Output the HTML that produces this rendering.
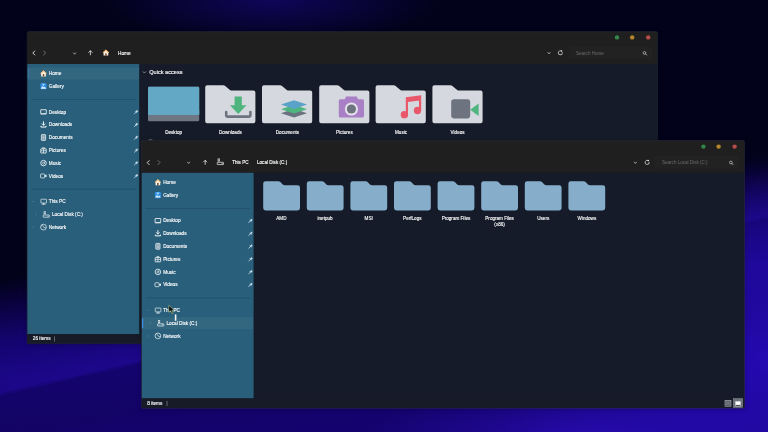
<!DOCTYPE html>
<html>
<head>
<meta charset="utf-8">
<title>File Explorer</title>
<style>
html,body{margin:0;padding:0;width:768px;height:432px;overflow:hidden;background:#02021a;}
body{font-family:"Liberation Sans",sans-serif;}
#stage{position:absolute;left:0;top:0;width:1920px;height:1080px;transform:scale(0.4);transform-origin:0 0;overflow:hidden;
  background:
    radial-gradient(ellipse 420px 110px at 680px 0px, rgba(18,6,100,0.85), rgba(18,6,100,0) 100%),
    radial-gradient(ellipse 700px 520px at 1920px 900px, rgba(42,12,200,0.75), rgba(42,12,200,0) 100%),
    radial-gradient(ellipse 520px 110px at 1450px 1085px, rgba(48,14,200,0.55), rgba(48,14,200,0) 100%),
    linear-gradient(167deg, rgba(50,20,190,0) 57%, rgba(50,20,190,0.17) 64.4%, rgba(0,0,30,0.17) 65.1%, rgba(0,0,30,0) 74%),
    linear-gradient(171deg, rgba(2,2,26,0) 0%, rgba(2,2,26,0) 50.5%, #0c0248 56.5%, #140470 62%, #180580 69%, #130368 78%, #170478 100%),
    #02021a;
}
#ui{position:absolute;left:0;top:0;width:1920px;height:1080px;filter:blur(0.9px);}
.win{position:absolute;background:#151b28;border-radius:6px 6px 3px 3px;overflow:hidden;box-shadow:0 0 0 1px rgba(58,58,72,0.7), 0 2px 10px rgba(0,0,0,0.25);}
.tb{position:absolute;left:0;top:0;right:0;background:#1f1f1f;box-shadow:inset 0 1.5px 0 rgba(255,255,255,0.055);}
.side{position:absolute;left:0;background:#295f7a;overflow:hidden;}
.status{position:absolute;left:0;right:0;bottom:0;height:24px;background:#161b27;}
.t{position:absolute;color:#fff;font-size:11.8px;line-height:16px;white-space:nowrap;-webkit-text-stroke:0.3px #fff;}
.ic{position:absolute;overflow:visible;}
.dot{position:absolute;width:11px;height:11px;border-radius:6px;}
.sel{position:absolute;left:0;right:0;height:30px;background:rgba(255,255,255,0.05);}
.sep{position:absolute;height:1.5px;background:rgba(8,28,42,0.22);}
.lbl{position:absolute;color:#fff;font-size:11.5px;line-height:15px;text-align:center;width:120px;-webkit-text-stroke:0.3px #fff;}
.search{position:absolute;height:32px;background:#222222;border-radius:4px;}
</style>
</head>
<body>
<div id="stage">
<div id="ui">

<div class="win" id="w1" style="left:68px;top:79px;width:1576px;height:780px;">
<div class="tb" style="height:81px;">
<svg class="ic" style="left:11px;top:47.0px" width="11" height="13" viewBox="0 0 11 13" ><path d="M8 1.5 L3 6.5 L8 11.5" fill="none" stroke="#fff" stroke-width="2" stroke-linecap="round" stroke-linejoin="round" opacity="1"/></svg>
<svg class="ic" style="left:38px;top:47.0px" width="11" height="13" viewBox="0 0 11 13" ><path d="M3 1.5 L8 6.5 L3 11.5" fill="none" stroke="#fff" stroke-width="2" stroke-linecap="round" stroke-linejoin="round" opacity="0.45"/></svg>
<svg class="ic" style="left:113.5px;top:51.5px" width="9" height="7" viewBox="0 0 9 7" ><path d="M1.8 1.3 L4.5 4.6 L7.2 1.3" fill="none" stroke="#fff" stroke-width="1.7" stroke-linecap="round" stroke-linejoin="round" opacity="0.85"/></svg>
<svg class="ic" style="left:152px;top:46.0px" width="12" height="13" viewBox="0 0 12 13" ><path d="M6 12 V2.4 M1.8 6 L6 1.8 L10.2 6" fill="none" stroke="#fff" stroke-width="2.1" stroke-linecap="round" stroke-linejoin="round" opacity="0.85"/></svg>
<svg class="ic" style="left:188.25px;top:44.25px" width="17.5" height="17.5" viewBox="0 0 16 16" ><path d="M8 1.2 L15 7.6 L13.4 7.6 L13.4 14.6 L2.6 14.6 L2.6 7.6 L1 7.6 Z" fill="#fff4e6"/><path d="M8 0.8 L15.4 7.8 L13.9 9 L8 3.6 L2.1 9 L0.6 7.8 Z" fill="#f2ae66"/><rect x="6.3" y="9.4" width="3.4" height="5.2" fill="#6e4424"/></svg>
<div class="t" style="left:227px;top:45.5px">Home</div>
<div class="search" style="left:1353px;top:37px;width:209px"></div>
<svg class="ic" style="left:1299.5px;top:51px" width="9" height="7" viewBox="0 0 9 7" ><path d="M1.8 1.3 L4.5 4.6 L7.2 1.3" fill="none" stroke="#fff" stroke-width="1.7" stroke-linecap="round" stroke-linejoin="round" opacity="0.85"/></svg>
<svg class="ic" style="left:1325px;top:45px" width="16" height="16" viewBox="0 0 16 16" ><path d="M13.2 8 A5.2 5.2 0 1 1 10.6 3.5" fill="none" stroke="#fff" stroke-width="1.8" stroke-linecap="round" opacity="0.9"/><path d="M9.4 0.8 L13.2 3.2 L9.8 5.8 Z" fill="#fff" opacity="0.9"/></svg>
<div class="t" style="left:1372px;top:45.5px;color:#6c6c6c;-webkit-text-stroke:0;font-size:11.4px">Search Home</div>
<svg class="ic" style="left:1538px;top:48px" width="12" height="12" viewBox="0 0 12 12" ><circle cx="5.2" cy="5.2" r="3.4" fill="none" stroke="#fff" stroke-width="1.6" opacity="0.8"/><path d="M7.8 7.8 L10.6 10.6" stroke="#fff" stroke-width="1.8" stroke-linecap="round" opacity="0.8"/></svg>
<div class="dot" style="left:1469px;top:9px;background:#328549"></div>
<div class="dot" style="left:1507px;top:9px;background:#b3862d"></div>
<div class="dot" style="left:1547px;top:9px;background:#b54c49"></div>
</div>
<div class="side" id="s1" style="top:81px;width:280px;height:675px;"><div style="position:absolute;left:0;top:-80px;width:280px;height:760px">
<div class="sep" style="left:10px;width:262px;top:168px"></div>
<div class="sep" style="left:10px;width:262px;top:392px"></div>
<div class="sel" style="top:89px"></div>
<div style="position:absolute;left:1px;top:90px;width:3px;height:28px;background:rgba(60,135,215,0.4);border-radius:2px"></div>
<svg class="ic" style="left:32.25px;top:95.25px" width="17.5" height="17.5" viewBox="0 0 16 16" ><path d="M8 1.2 L15 7.6 L13.4 7.6 L13.4 14.6 L2.6 14.6 L2.6 7.6 L1 7.6 Z" fill="#fff4e6"/><path d="M8 0.8 L15.4 7.8 L13.9 9 L8 3.6 L2.1 9 L0.6 7.8 Z" fill="#f2ae66"/><rect x="6.3" y="9.4" width="3.4" height="5.2" fill="#6e4424"/></svg>
<div class="t" style="left:54px;top:96px">Home</div>
<svg class="ic" style="left:32.25px;top:127.25px" width="17.5" height="17.5" viewBox="0 0 16 16" ><rect x="1" y="1" width="14" height="14" rx="2.5" fill="#2f8fe6"/><path d="M1.5 13.5 L6 7.5 L9 11 L11 9 L14.5 13.5 Z" fill="#dff1ff"/><path d="M4 2 L12 2 L8 7.5 Z" fill="#9dd3ff"/></svg>
<div class="t" style="left:54px;top:128px">Gallery</div>
<svg class="ic" style="left:32.25px;top:191.25px" width="17.5" height="17.5" viewBox="0 0 16 16" ><rect x="1.6" y="3" width="12.8" height="9" rx="0.6" fill="none" stroke="#fff" stroke-width="1.8"/><path d="M1 13.2 H15" stroke="#fff" stroke-width="1.3"/></svg>
<div class="t" style="left:54px;top:192px">Desktop</div>
<svg class="ic" style="left:266.5px;top:194px" width="11.5" height="11.5" viewBox="0 0 12 12" ><path d="M1 11 L5.2 6.8" stroke="#cfe3ee" stroke-width="2" stroke-linecap="round"/><path d="M7.6 1.2 L10.8 4.4 L9.6 5 L7.6 7 L7.4 9 L3 4.6 L5 4.4 L7 2.4 Z" fill="#cfe3ee" stroke="#cfe3ee" stroke-width="0.6"/></svg>
<svg class="ic" style="left:32.25px;top:223.25px" width="17.5" height="17.5" viewBox="0 0 16 16" ><path d="M8 1.2 V8.6 M4.8 6 L8 9.4 L11.2 6" fill="none" stroke="#fff" stroke-width="2" stroke-linecap="round" stroke-linejoin="round"/><path d="M2.2 10.6 V13.4 H13.8 V10.6" fill="none" stroke="#fff" stroke-width="2.2" stroke-linejoin="round"/></svg>
<div class="t" style="left:54px;top:224px">Downloads</div>
<svg class="ic" style="left:266.5px;top:226px" width="11.5" height="11.5" viewBox="0 0 12 12" ><path d="M1 11 L5.2 6.8" stroke="#cfe3ee" stroke-width="2" stroke-linecap="round"/><path d="M7.6 1.2 L10.8 4.4 L9.6 5 L7.6 7 L7.4 9 L3 4.6 L5 4.4 L7 2.4 Z" fill="#cfe3ee" stroke="#cfe3ee" stroke-width="0.6"/></svg>
<svg class="ic" style="left:32.25px;top:255.25px" width="17.5" height="17.5" viewBox="0 0 16 16" ><rect x="3.2" y="1.4" width="9.6" height="13.2" rx="1.2" fill="rgba(255,255,255,0.35)" stroke="#fff" stroke-width="1.6"/><path d="M5.8 5 H10.2 M5.8 8 H10.2 M5.8 11 H10.2" stroke="#fff" stroke-width="1.1"/></svg>
<div class="t" style="left:54px;top:256px">Documents</div>
<svg class="ic" style="left:266.5px;top:258px" width="11.5" height="11.5" viewBox="0 0 12 12" ><path d="M1 11 L5.2 6.8" stroke="#cfe3ee" stroke-width="2" stroke-linecap="round"/><path d="M7.6 1.2 L10.8 4.4 L9.6 5 L7.6 7 L7.4 9 L3 4.6 L5 4.4 L7 2.4 Z" fill="#cfe3ee" stroke="#cfe3ee" stroke-width="0.6"/></svg>
<svg class="ic" style="left:32.25px;top:287.25px" width="17.5" height="17.5" viewBox="0 0 16 16" ><rect x="1.8" y="4.6" width="12.4" height="9.6" rx="0.8" fill="none" stroke="#fff" stroke-width="1.8"/><path d="M5.6 4.4 V2 H10.4 V4.4 M8 4.6 V14 M2 9 H14" fill="none" stroke="#fff" stroke-width="1.4"/></svg>
<div class="t" style="left:54px;top:288px">Pictures</div>
<svg class="ic" style="left:266.5px;top:290px" width="11.5" height="11.5" viewBox="0 0 12 12" ><path d="M1 11 L5.2 6.8" stroke="#cfe3ee" stroke-width="2" stroke-linecap="round"/><path d="M7.6 1.2 L10.8 4.4 L9.6 5 L7.6 7 L7.4 9 L3 4.6 L5 4.4 L7 2.4 Z" fill="#cfe3ee" stroke="#cfe3ee" stroke-width="0.6"/></svg>
<svg class="ic" style="left:32.25px;top:319.25px" width="17.5" height="17.5" viewBox="0 0 16 16" ><circle cx="8" cy="8" r="6.3" fill="none" stroke="#fff" stroke-width="1.8"/><circle cx="8" cy="8.4" r="2.3" fill="none" stroke="#fff" stroke-width="1.3"/><path d="M10.2 8.4 V4.4" stroke="#fff" stroke-width="1.2"/></svg>
<div class="t" style="left:54px;top:320px">Music</div>
<svg class="ic" style="left:266.5px;top:322px" width="11.5" height="11.5" viewBox="0 0 12 12" ><path d="M1 11 L5.2 6.8" stroke="#cfe3ee" stroke-width="2" stroke-linecap="round"/><path d="M7.6 1.2 L10.8 4.4 L9.6 5 L7.6 7 L7.4 9 L3 4.6 L5 4.4 L7 2.4 Z" fill="#cfe3ee" stroke="#cfe3ee" stroke-width="0.6"/></svg>
<svg class="ic" style="left:32.25px;top:351.25px" width="17.5" height="17.5" viewBox="0 0 16 16" ><rect x="1.2" y="3.6" width="9.6" height="9" rx="1.4" fill="none" stroke="#fff" stroke-width="1.5"/><path d="M11 7 L14.8 5 V11.2 L11 9.2 Z" fill="#fff"/></svg>
<div class="t" style="left:54px;top:352px">Videos</div>
<svg class="ic" style="left:266.5px;top:354px" width="11.5" height="11.5" viewBox="0 0 12 12" ><path d="M1 11 L5.2 6.8" stroke="#cfe3ee" stroke-width="2" stroke-linecap="round"/><path d="M7.6 1.2 L10.8 4.4 L9.6 5 L7.6 7 L7.4 9 L3 4.6 L5 4.4 L7 2.4 Z" fill="#cfe3ee" stroke="#cfe3ee" stroke-width="0.6"/></svg>
<svg class="ic" style="left:32.75px;top:415.75px" width="16.5" height="16.5" viewBox="0 0 16 16" ><rect x="1.2" y="2" width="13.6" height="9.4" rx="1.2" fill="none" stroke="#fff" stroke-width="1.5"/><path d="M4.3 14.2 H11.7 M8 11.6 V14" stroke="#fff" stroke-width="1.5" stroke-linecap="round"/></svg>
<div class="t" style="left:54px;top:416px">This PC</div>
<svg class="ic" style="left:11px;top:421px" width="8" height="6" viewBox="0 0 8 6" ><path d="M1 1.2 L4 4.4 L7 1.2" fill="none" stroke="#9fb8c6" stroke-width="1.3" opacity="0.4"/></svg>
<svg class="ic" style="left:39.25px;top:447.25px" width="17.5" height="17.5" viewBox="0 0 16 16" ><rect x="1" y="9.6" width="14" height="5" rx="0.8" fill="none" stroke="#fff" stroke-width="1.5"/><path d="M2 1 H6.6 V7.6 H2 Z" fill="#fff"/><path d="M4.3 1 V7.6 M2 4.3 H6.6" stroke="#295f7a" stroke-width="0.9"/><rect x="10.6" y="11.4" width="2.4" height="1.4" fill="#fff"/></svg>
<div class="t" style="left:62px;top:448px">Local Disk (C:)</div>
<svg class="ic" style="left:19px;top:452px" width="6" height="8" viewBox="0 0 6 8" ><path d="M1.2 1 L4.4 4 L1.2 7" fill="none" stroke="#9fb8c6" stroke-width="1.3" opacity="0.4"/></svg>
<svg class="ic" style="left:32.25px;top:479.25px" width="17.5" height="17.5" viewBox="0 0 16 16" ><circle cx="8" cy="8" r="6.6" fill="none" stroke="#fff" stroke-width="1.5"/><path d="M5.2 2.6 L8.4 8.4 L13.6 10" fill="none" stroke="#fff" stroke-width="1.3"/></svg>
<div class="t" style="left:54px;top:480px">Network</div>
<svg class="ic" style="left:11px;top:485px" width="8" height="6" viewBox="0 0 8 6" ><path d="M1 1.2 L4 4.4 L7 1.2" fill="none" stroke="#9fb8c6" stroke-width="1.3" opacity="0.4"/></svg>
</div></div>
<svg class="ic" style="left:288px;top:98px" width="10" height="8" viewBox="0 0 10 8" ><path d="M1 1.5 L5 5.5 L9 1.5" fill="none" stroke="#cfd6e0" stroke-width="1.4"/></svg>
<div class="t" style="left:305px;top:92px;font-size:14px;line-height:18px">Quick access</div>
<svg class="ic" style="left:302px;top:138px" width="128" height="86" viewBox="0 0 128 86" ><rect x="0" y="0" width="128" height="86" rx="3" fill="#6f7782"/><rect x="0" y="0" width="128" height="70" rx="3" fill="#63a9c6"/><rect x="0" y="60" width="128" height="10" fill="#63a9c6"/></svg>
<svg class="ic" style="left:444.5px;top:133.5px" width="125.5" height="95" viewBox="0 0 125.5 95" ><path d="M5 0 H45 Q48 0 50 2 L62 12 Q64 13.5 67 13.5 H120.5 Q125.5 13.5 125.5 18.5 V90 Q125.5 95 120.5 95 H5 Q0 95 0 90 V5 Q0 0 5 0 Z" fill="#d5d8de"/><path d="M73.5 28 H91.5 V50 H103 L82.5 72 L62 50 H73.5 Z" fill="#4db57d"/><path d="M52.5 67 V74.5 Q52.5 78.5 56.5 78.5 H109 Q113 78.5 113 74.5 V67" fill="none" stroke="#6d7480" stroke-width="6.5" stroke-linecap="round"/></svg>
<svg class="ic" style="left:587px;top:133.5px" width="125.5" height="95" viewBox="0 0 125.5 95" ><path d="M5 0 H45 Q48 0 50 2 L62 12 Q64 13.5 67 13.5 H120.5 Q125.5 13.5 125.5 18.5 V90 Q125.5 95 120.5 95 H5 Q0 95 0 90 V5 Q0 0 5 0 Z" fill="#d5d8de"/><path d="M80 59 L112.5 70 L80 81 L47.5 70 Z" fill="#6b7380"/><path d="M80 49 L112.5 60 L80 71 L47.5 60 Z" fill="#4db57d"/><path d="M80 37.5 L112.5 48.5 L80 59.5 L47.5 48.5 Z" fill="#5aa2c8"/></svg>
<svg class="ic" style="left:729.5px;top:133.5px" width="125.5" height="95" viewBox="0 0 125.5 95" ><path d="M5 0 H45 Q48 0 50 2 L62 12 Q64 13.5 67 13.5 H120.5 Q125.5 13.5 125.5 18.5 V90 Q125.5 95 120.5 95 H5 Q0 95 0 90 V5 Q0 0 5 0 Z" fill="#d5d8de"/><path d="M67 28 H94 L97 35 H108 Q112 35 112 39 V77 Q112 81 108 81 H53 Q49 81 49 77 V39 Q49 35 53 35 H64 Z" fill="#a97fc6"/><circle cx="80.5" cy="59.5" r="16.5" fill="#e6e2ec"/><circle cx="80.5" cy="59.5" r="11.5" fill="#6d7480"/></svg>
<svg class="ic" style="left:871px;top:133.5px" width="125.5" height="95" viewBox="0 0 125.5 95" ><path d="M5 0 H45 Q48 0 50 2 L62 12 Q64 13.5 67 13.5 H120.5 Q125.5 13.5 125.5 18.5 V90 Q125.5 95 120.5 95 H5 Q0 95 0 90 V5 Q0 0 5 0 Z" fill="#d5d8de"/><path d="M75.5 30 L114 25 V37.5 L81 42 V74 H75.5 Z M108.5 34 H114 V64 H108.5 Z" fill="#e8586a"/><circle cx="72" cy="73.6" r="9.2" fill="#e8586a"/><circle cx="104.7" cy="63.3" r="9.2" fill="#e8586a"/></svg>
<svg class="ic" style="left:1012.5px;top:133.5px" width="125.5" height="95" viewBox="0 0 125.5 95" ><path d="M5 0 H45 Q48 0 50 2 L62 12 Q64 13.5 67 13.5 H120.5 Q125.5 13.5 125.5 18.5 V90 Q125.5 95 120.5 95 H5 Q0 95 0 90 V5 Q0 0 5 0 Z" fill="#d5d8de"/><rect x="47" y="35" width="47.5" height="48" rx="7" fill="#6d7480"/><path d="M94.5 61.3 L115.5 45.5 V77 Z" fill="#4db57d"/></svg>
<div class="lbl" style="left:306px;top:246px">Desktop</div>
<div class="lbl" style="left:448.0px;top:246px">Downloads</div>
<div class="lbl" style="left:590.5px;top:246px">Documents</div>
<div class="lbl" style="left:733.0px;top:246px">Pictures</div>
<div class="lbl" style="left:874.5px;top:246px">Music</div>
<div class="lbl" style="left:1016.0px;top:246px">Videos</div>
<div style="position:absolute;left:304px;top:270px;width:9px;height:2px;background:#cfd6e0;opacity:.75"></div>
<div class="status"><div class="t" style="left:14px;top:4px;font-size:11.8px">26 items</div><div style="position:absolute;left:68px;top:6px;width:1px;height:13px;background:#d0d0d0"></div></div>
</div>
<div class="win" id="w2" style="left:354px;top:351px;width:1507px;height:669px;">
<div class="tb" style="height:81px;">
<svg class="ic" style="left:10.5px;top:48.5px" width="11" height="13" viewBox="0 0 11 13" ><path d="M8 1.5 L3 6.5 L8 11.5" fill="none" stroke="#fff" stroke-width="2" stroke-linecap="round" stroke-linejoin="round" opacity="1"/></svg>
<svg class="ic" style="left:37.5px;top:48.5px" width="11" height="13" viewBox="0 0 11 13" ><path d="M3 1.5 L8 6.5 L3 11.5" fill="none" stroke="#fff" stroke-width="2" stroke-linecap="round" stroke-linejoin="round" opacity="0.45"/></svg>
<svg class="ic" style="left:113.0px;top:53px" width="9" height="7" viewBox="0 0 9 7" ><path d="M1.8 1.3 L4.5 4.6 L7.2 1.3" fill="none" stroke="#fff" stroke-width="1.7" stroke-linecap="round" stroke-linejoin="round" opacity="0.85"/></svg>
<svg class="ic" style="left:152.5px;top:47.5px" width="12" height="13" viewBox="0 0 12 13" ><path d="M6 12 V2.4 M1.8 6 L6 1.8 L10.2 6" fill="none" stroke="#fff" stroke-width="2.1" stroke-linecap="round" stroke-linejoin="round" opacity="0.85"/></svg>
<svg class="ic" style="left:187.5px;top:44.0px" width="18" height="18" viewBox="0 0 16 16" ><rect x="1" y="9.6" width="14" height="5" rx="0.8" fill="none" stroke="#fff" stroke-width="1.5"/><path d="M2 1 H6.6 V7.6 H2 Z" fill="#fff"/><path d="M4.3 1 V7.6 M2 4.3 H6.6" stroke="#1f1f1f" stroke-width="0.9"/><rect x="10.6" y="11.4" width="2.4" height="1.4" fill="#fff"/></svg>
<div class="t" style="left:226.5px;top:46.5px;font-size:11.5px">This PC</div>
<div class="t" style="left:288.5px;top:46.5px;font-size:11.5px">Local Disk (C:)</div>
<div class="search" style="left:1283px;top:39px;width:209px"></div>
<svg class="ic" style="left:1229.5px;top:52.5px" width="9" height="7" viewBox="0 0 9 7" ><path d="M1.8 1.3 L4.5 4.6 L7.2 1.3" fill="none" stroke="#fff" stroke-width="1.7" stroke-linecap="round" stroke-linejoin="round" opacity="0.85"/></svg>
<svg class="ic" style="left:1256px;top:46.5px" width="16" height="16" viewBox="0 0 16 16" ><path d="M13.2 8 A5.2 5.2 0 1 1 10.6 3.5" fill="none" stroke="#fff" stroke-width="1.8" stroke-linecap="round" opacity="0.9"/><path d="M9.4 0.8 L13.2 3.2 L9.8 5.8 Z" fill="#fff" opacity="0.9"/></svg>
<div class="t" style="left:1301px;top:47px;color:#6c6c6c;-webkit-text-stroke:0;font-size:11.4px">Search Local Disk (C:)</div>
<svg class="ic" style="left:1467.5px;top:49.5px" width="12" height="12" viewBox="0 0 12 12" ><circle cx="5.2" cy="5.2" r="3.4" fill="none" stroke="#fff" stroke-width="1.6" opacity="0.8"/><path d="M7.8 7.8 L10.6 10.6" stroke="#fff" stroke-width="1.8" stroke-linecap="round" opacity="0.8"/></svg>
<div class="dot" style="left:1399px;top:10px;background:#328549"></div>
<div class="dot" style="left:1437px;top:10px;background:#b3862d"></div>
<div class="dot" style="left:1477px;top:10px;background:#b54c49"></div>
</div>
<div class="side" id="s2" style="top:81px;width:280px;height:564px;"><div style="position:absolute;left:0;top:-80px;width:280px;height:760px">
<div class="sep" style="left:10px;width:262px;top:168px"></div>
<div class="sep" style="left:10px;width:262px;top:392px"></div>
<svg class="ic" style="left:32.25px;top:95.25px" width="17.5" height="17.5" viewBox="0 0 16 16" ><path d="M8 1.2 L15 7.6 L13.4 7.6 L13.4 14.6 L2.6 14.6 L2.6 7.6 L1 7.6 Z" fill="#fff4e6"/><path d="M8 0.8 L15.4 7.8 L13.9 9 L8 3.6 L2.1 9 L0.6 7.8 Z" fill="#f2ae66"/><rect x="6.3" y="9.4" width="3.4" height="5.2" fill="#6e4424"/></svg>
<div class="t" style="left:54px;top:96px">Home</div>
<svg class="ic" style="left:32.25px;top:127.25px" width="17.5" height="17.5" viewBox="0 0 16 16" ><rect x="1" y="1" width="14" height="14" rx="2.5" fill="#2f8fe6"/><path d="M1.5 13.5 L6 7.5 L9 11 L11 9 L14.5 13.5 Z" fill="#dff1ff"/><path d="M4 2 L12 2 L8 7.5 Z" fill="#9dd3ff"/></svg>
<div class="t" style="left:54px;top:128px">Gallery</div>
<svg class="ic" style="left:32.25px;top:191.25px" width="17.5" height="17.5" viewBox="0 0 16 16" ><rect x="1.6" y="3" width="12.8" height="9" rx="0.6" fill="none" stroke="#fff" stroke-width="1.8"/><path d="M1 13.2 H15" stroke="#fff" stroke-width="1.3"/></svg>
<div class="t" style="left:54px;top:192px">Desktop</div>
<svg class="ic" style="left:266.5px;top:194px" width="11.5" height="11.5" viewBox="0 0 12 12" ><path d="M1 11 L5.2 6.8" stroke="#cfe3ee" stroke-width="2" stroke-linecap="round"/><path d="M7.6 1.2 L10.8 4.4 L9.6 5 L7.6 7 L7.4 9 L3 4.6 L5 4.4 L7 2.4 Z" fill="#cfe3ee" stroke="#cfe3ee" stroke-width="0.6"/></svg>
<svg class="ic" style="left:32.25px;top:223.25px" width="17.5" height="17.5" viewBox="0 0 16 16" ><path d="M8 1.2 V8.6 M4.8 6 L8 9.4 L11.2 6" fill="none" stroke="#fff" stroke-width="2" stroke-linecap="round" stroke-linejoin="round"/><path d="M2.2 10.6 V13.4 H13.8 V10.6" fill="none" stroke="#fff" stroke-width="2.2" stroke-linejoin="round"/></svg>
<div class="t" style="left:54px;top:224px">Downloads</div>
<svg class="ic" style="left:266.5px;top:226px" width="11.5" height="11.5" viewBox="0 0 12 12" ><path d="M1 11 L5.2 6.8" stroke="#cfe3ee" stroke-width="2" stroke-linecap="round"/><path d="M7.6 1.2 L10.8 4.4 L9.6 5 L7.6 7 L7.4 9 L3 4.6 L5 4.4 L7 2.4 Z" fill="#cfe3ee" stroke="#cfe3ee" stroke-width="0.6"/></svg>
<svg class="ic" style="left:32.25px;top:255.25px" width="17.5" height="17.5" viewBox="0 0 16 16" ><rect x="3.2" y="1.4" width="9.6" height="13.2" rx="1.2" fill="rgba(255,255,255,0.35)" stroke="#fff" stroke-width="1.6"/><path d="M5.8 5 H10.2 M5.8 8 H10.2 M5.8 11 H10.2" stroke="#fff" stroke-width="1.1"/></svg>
<div class="t" style="left:54px;top:256px">Documents</div>
<svg class="ic" style="left:266.5px;top:258px" width="11.5" height="11.5" viewBox="0 0 12 12" ><path d="M1 11 L5.2 6.8" stroke="#cfe3ee" stroke-width="2" stroke-linecap="round"/><path d="M7.6 1.2 L10.8 4.4 L9.6 5 L7.6 7 L7.4 9 L3 4.6 L5 4.4 L7 2.4 Z" fill="#cfe3ee" stroke="#cfe3ee" stroke-width="0.6"/></svg>
<svg class="ic" style="left:32.25px;top:287.25px" width="17.5" height="17.5" viewBox="0 0 16 16" ><rect x="1.8" y="4.6" width="12.4" height="9.6" rx="0.8" fill="none" stroke="#fff" stroke-width="1.8"/><path d="M5.6 4.4 V2 H10.4 V4.4 M8 4.6 V14 M2 9 H14" fill="none" stroke="#fff" stroke-width="1.4"/></svg>
<div class="t" style="left:54px;top:288px">Pictures</div>
<svg class="ic" style="left:266.5px;top:290px" width="11.5" height="11.5" viewBox="0 0 12 12" ><path d="M1 11 L5.2 6.8" stroke="#cfe3ee" stroke-width="2" stroke-linecap="round"/><path d="M7.6 1.2 L10.8 4.4 L9.6 5 L7.6 7 L7.4 9 L3 4.6 L5 4.4 L7 2.4 Z" fill="#cfe3ee" stroke="#cfe3ee" stroke-width="0.6"/></svg>
<svg class="ic" style="left:32.25px;top:319.25px" width="17.5" height="17.5" viewBox="0 0 16 16" ><circle cx="8" cy="8" r="6.3" fill="none" stroke="#fff" stroke-width="1.8"/><circle cx="8" cy="8.4" r="2.3" fill="none" stroke="#fff" stroke-width="1.3"/><path d="M10.2 8.4 V4.4" stroke="#fff" stroke-width="1.2"/></svg>
<div class="t" style="left:54px;top:320px">Music</div>
<svg class="ic" style="left:266.5px;top:322px" width="11.5" height="11.5" viewBox="0 0 12 12" ><path d="M1 11 L5.2 6.8" stroke="#cfe3ee" stroke-width="2" stroke-linecap="round"/><path d="M7.6 1.2 L10.8 4.4 L9.6 5 L7.6 7 L7.4 9 L3 4.6 L5 4.4 L7 2.4 Z" fill="#cfe3ee" stroke="#cfe3ee" stroke-width="0.6"/></svg>
<svg class="ic" style="left:32.25px;top:351.25px" width="17.5" height="17.5" viewBox="0 0 16 16" ><rect x="1.2" y="3.6" width="9.6" height="9" rx="1.4" fill="none" stroke="#fff" stroke-width="1.5"/><path d="M11 7 L14.8 5 V11.2 L11 9.2 Z" fill="#fff"/></svg>
<div class="t" style="left:54px;top:352px">Videos</div>
<svg class="ic" style="left:266.5px;top:354px" width="11.5" height="11.5" viewBox="0 0 12 12" ><path d="M1 11 L5.2 6.8" stroke="#cfe3ee" stroke-width="2" stroke-linecap="round"/><path d="M7.6 1.2 L10.8 4.4 L9.6 5 L7.6 7 L7.4 9 L3 4.6 L5 4.4 L7 2.4 Z" fill="#cfe3ee" stroke="#cfe3ee" stroke-width="0.6"/></svg>
<svg class="ic" style="left:32.75px;top:415.75px" width="16.5" height="16.5" viewBox="0 0 16 16" ><rect x="1.2" y="2" width="13.6" height="9.4" rx="1.2" fill="none" stroke="#fff" stroke-width="1.5"/><path d="M4.3 14.2 H11.7 M8 11.6 V14" stroke="#fff" stroke-width="1.5" stroke-linecap="round"/></svg>
<div class="t" style="left:54px;top:416px">This PC</div>
<svg class="ic" style="left:11px;top:421px" width="8" height="6" viewBox="0 0 8 6" ><path d="M1 1.2 L4 4.4 L7 1.2" fill="none" stroke="#9fb8c6" stroke-width="1.3" opacity="0.4"/></svg>
<div class="sel" style="top:441px"></div>
<div style="position:absolute;left:0;top:443px;width:4px;height:26px;background:#3f8fe0;border-radius:2px"></div>
<svg class="ic" style="left:39.25px;top:447.25px" width="17.5" height="17.5" viewBox="0 0 16 16" ><rect x="1" y="9.6" width="14" height="5" rx="0.8" fill="none" stroke="#fff" stroke-width="1.5"/><path d="M2 1 H6.6 V7.6 H2 Z" fill="#fff"/><path d="M4.3 1 V7.6 M2 4.3 H6.6" stroke="#295f7a" stroke-width="0.9"/><rect x="10.6" y="11.4" width="2.4" height="1.4" fill="#fff"/></svg>
<div class="t" style="left:62px;top:448px">Local Disk (C:)</div>
<svg class="ic" style="left:19px;top:452px" width="6" height="8" viewBox="0 0 6 8" ><path d="M1.2 1 L4.4 4 L1.2 7" fill="none" stroke="#9fb8c6" stroke-width="1.3" opacity="0.4"/></svg>
<svg class="ic" style="left:32.25px;top:479.25px" width="17.5" height="17.5" viewBox="0 0 16 16" ><circle cx="8" cy="8" r="6.6" fill="none" stroke="#fff" stroke-width="1.5"/><path d="M5.2 2.6 L8.4 8.4 L13.6 10" fill="none" stroke="#fff" stroke-width="1.3"/></svg>
<div class="t" style="left:54px;top:480px">Network</div>
<svg class="ic" style="left:11px;top:485px" width="8" height="6" viewBox="0 0 8 6" ><path d="M1 1.2 L4 4.4 L7 1.2" fill="none" stroke="#9fb8c6" stroke-width="1.3" opacity="0.4"/></svg>
</div></div>
<svg class="ic" style="left:303.5px;top:102px" width="92" height="73" viewBox="0 0 92 73" ><path d="M6 0 H38 Q41 0 43 2 L49 8 Q51 10 54 10 H86 Q92 10 92 16 V67 Q92 73 86 73 H6 Q0 73 0 67 V6 Q0 0 6 0 Z" fill="#86aeca"/></svg>
<div class="lbl" style="left:289.5px;top:187px;width:120px">AMD</div>
<svg class="ic" style="left:412.6px;top:102px" width="92" height="73" viewBox="0 0 92 73" ><path d="M6 0 H38 Q41 0 43 2 L49 8 Q51 10 54 10 H86 Q92 10 92 16 V67 Q92 73 86 73 H6 Q0 73 0 67 V6 Q0 0 6 0 Z" fill="#86aeca"/></svg>
<div class="lbl" style="left:398.6px;top:187px;width:120px">inetpub</div>
<svg class="ic" style="left:521.7px;top:102px" width="92" height="73" viewBox="0 0 92 73" ><path d="M6 0 H38 Q41 0 43 2 L49 8 Q51 10 54 10 H86 Q92 10 92 16 V67 Q92 73 86 73 H6 Q0 73 0 67 V6 Q0 0 6 0 Z" fill="#86aeca"/></svg>
<div class="lbl" style="left:507.7px;top:187px;width:120px">MSI</div>
<svg class="ic" style="left:630.8px;top:102px" width="92" height="73" viewBox="0 0 92 73" ><path d="M6 0 H38 Q41 0 43 2 L49 8 Q51 10 54 10 H86 Q92 10 92 16 V67 Q92 73 86 73 H6 Q0 73 0 67 V6 Q0 0 6 0 Z" fill="#86aeca"/></svg>
<div class="lbl" style="left:616.8px;top:187px;width:120px">PerfLogs</div>
<svg class="ic" style="left:739.9px;top:102px" width="92" height="73" viewBox="0 0 92 73" ><path d="M6 0 H38 Q41 0 43 2 L49 8 Q51 10 54 10 H86 Q92 10 92 16 V67 Q92 73 86 73 H6 Q0 73 0 67 V6 Q0 0 6 0 Z" fill="#86aeca"/></svg>
<div class="lbl" style="left:725.9px;top:187px;width:120px">Program Files</div>
<svg class="ic" style="left:849.0px;top:102px" width="92" height="73" viewBox="0 0 92 73" ><path d="M6 0 H38 Q41 0 43 2 L49 8 Q51 10 54 10 H86 Q92 10 92 16 V67 Q92 73 86 73 H6 Q0 73 0 67 V6 Q0 0 6 0 Z" fill="#86aeca"/></svg>
<div class="lbl" style="left:853.0px;top:187px;width:84px">Program Files (x86)</div>
<svg class="ic" style="left:958.1px;top:102px" width="92" height="73" viewBox="0 0 92 73" ><path d="M6 0 H38 Q41 0 43 2 L49 8 Q51 10 54 10 H86 Q92 10 92 16 V67 Q92 73 86 73 H6 Q0 73 0 67 V6 Q0 0 6 0 Z" fill="#86aeca"/></svg>
<div class="lbl" style="left:944.1px;top:187px;width:120px">Users</div>
<svg class="ic" style="left:1067.2px;top:102px" width="92" height="73" viewBox="0 0 92 73" ><path d="M6 0 H38 Q41 0 43 2 L49 8 Q51 10 54 10 H86 Q92 10 92 16 V67 Q92 73 86 73 H6 Q0 73 0 67 V6 Q0 0 6 0 Z" fill="#86aeca"/></svg>
<div class="lbl" style="left:1053.2px;top:187px;width:120px">Windows</div>
<div class="status"><div class="t" style="left:14px;top:4px;font-size:11.8px">8 items</div><div style="position:absolute;left:63px;top:6px;width:1px;height:13px;background:#d0d0d0"></div>
<div style="position:absolute;left:1458px;top:4px;width:16px;height:16px;background:#59606a;border:1.5px solid #bfc3c9;box-sizing:border-box"></div>
<svg class="ic" style="left:1461px;top:7px" width="10" height="10" viewBox="0 0 10 10" ><rect x="0.5" y="0.5" width="9" height="9" fill="#6d737b"/></svg>
<div style="position:absolute;left:1479px;top:0px;width:24px;height:23px;background:#6c7279;border:1px solid #8d9299;box-sizing:border-box"></div>
<svg class="ic" style="left:1484px;top:7px" width="14" height="13" viewBox="0 0 14 13" ><rect x="0" y="0" width="14" height="13" fill="#c9ccd1"/><rect x="1.5" y="1.5" width="11" height="7" fill="#ffffff"/><rect x="1.5" y="9.5" width="11" height="2" fill="#33373e"/></svg>
</div>
</div>
<svg class="ic" style="left:421px;top:762px" width="16" height="26" viewBox="0 0 16 26" ><path d="M1 1 V19 L5.5 15 L8.8 22.5 L11.8 21.2 L8.6 14 H14.5 Z" fill="#0c0c0c" stroke="#c2dc9c" stroke-width="1.3"/></svg>
<div style="position:absolute;left:437px;top:786px;width:4px;height:16px;background:#f4f4f4;"></div>
</div>
</div>
</body>
</html>
